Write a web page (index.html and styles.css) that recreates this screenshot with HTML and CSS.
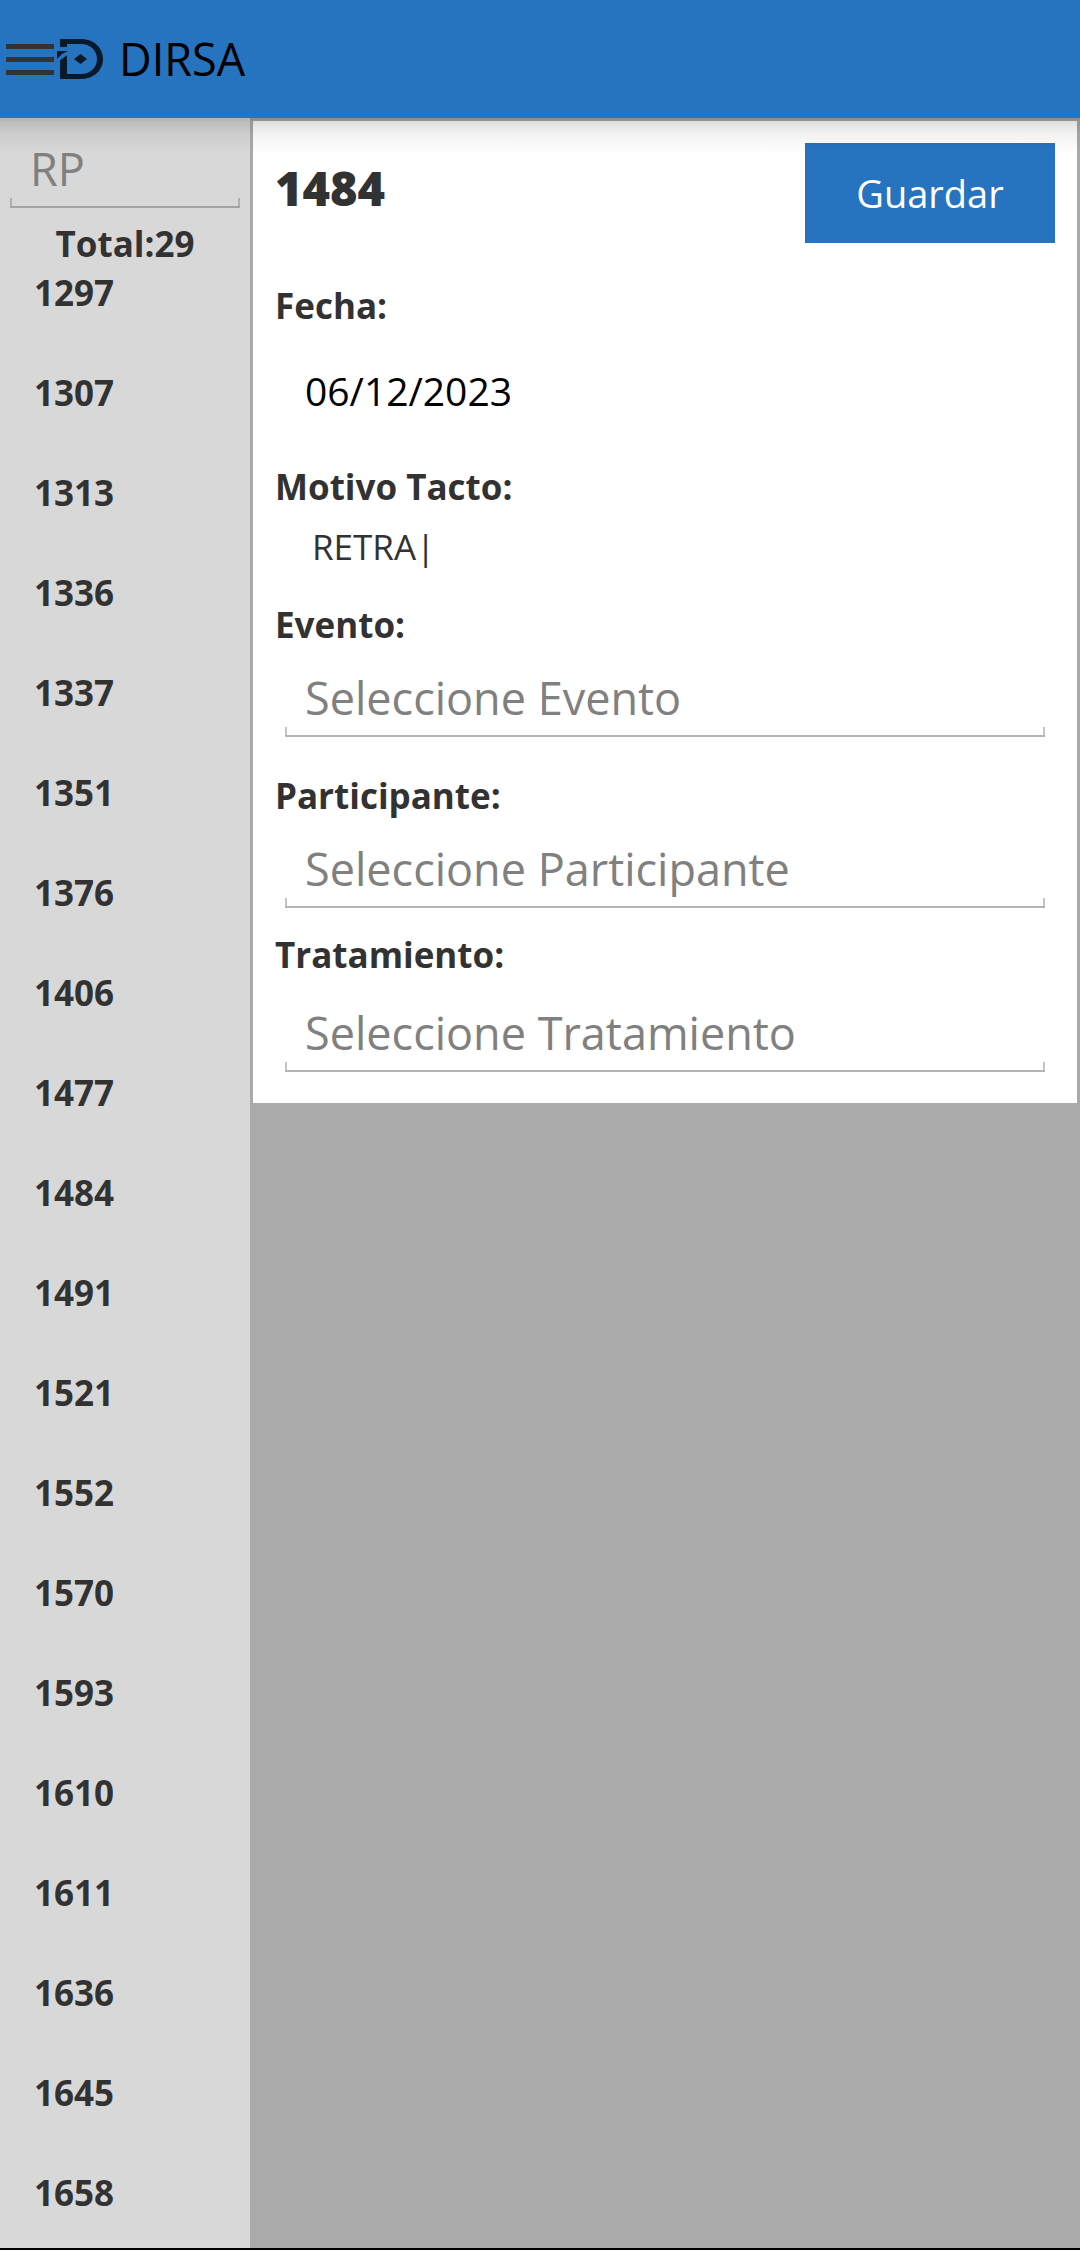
FILE: index.html
```
<!DOCTYPE html>
<html lang="es">
<head>
  <meta charset="utf-8">
  <meta name="viewport" content="width=device-width, initial-scale=1">
  <title>DIRSA</title>
  <link rel="stylesheet" href="styles.css">
</head>
<body>
  <div class="app">
    <header class="topbar">
      <button class="menu" type="button" aria-label="Menú">
        <svg width="48" height="31" viewBox="0 0 48 31" aria-hidden="true">
          <path d="M0 0h48v5H0zM0 13h48v5H0zM0 26h48v5H0z" fill="#333"/>
        </svg>
      </button>
      <svg class="logo" width="46" height="40" viewBox="0 0 46 40" aria-hidden="true">
        <path d="M3 0H24C37 0 46 9 46 20S37 40 24 40H3V21L10 16V35H24C34 35 40 28 40 20S34 5 24 5H10V8H3Z" fill="#071a2b"/>
        <path d="M0 12H11L5 15L0 20Z" fill="#071a2b"/>
        <path d="M1 22L12 13.500" stroke="#2673bf" stroke-width="1.500"/>
        <path d="M17 20L23.500 15L30 20L23.500 25Z" fill="#071a2b"/>
      </svg>
      <span class="brand">DIRSA</span>
    </header>

    <div class="body">
      <aside class="sidebar">
        <input class="field" type="text" placeholder="RP" aria-label="RP">
        <p class="total">Total:29</p>
        <ul class="list">
          <li>1297</li>
          <li>1307</li>
          <li>1313</li>
          <li>1336</li>
          <li>1337</li>
          <li>1351</li>
          <li>1376</li>
          <li>1406</li>
          <li>1477</li>
          <li>1484</li>
          <li>1491</li>
          <li>1521</li>
          <li>1552</li>
          <li>1570</li>
          <li>1593</li>
          <li>1610</li>
          <li>1611</li>
          <li>1636</li>
          <li>1645</li>
          <li>1658</li>
        </ul>
      </aside>

      <main class="main">
        <form class="panel">
          <div class="panel-head">
            <h1 class="title">1484</h1>
            <button class="save" type="button">Guardar</button>
          </div>
          <div class="group group-date">
            <label for="fecha">Fecha:</label>
            <input class="plain date" id="fecha" type="text" value="06/12/2023">
          </div>
          <div class="group group-reason">
            <label for="motivo">Motivo Tacto:</label>
            <input class="plain reason" id="motivo" type="text" value="RETRA|">
          </div>
          <div class="group group-event">
            <label for="evento">Evento:</label>
            <input class="field" id="evento" type="text" placeholder="Seleccione Evento">
          </div>
          <div class="group group-person">
            <label for="participante">Participante:</label>
            <input class="field" id="participante" type="text" placeholder="Seleccione Participante">
          </div>
          <div class="group group-treatment">
            <label for="tratamiento">Tratamiento:</label>
            <input class="field" id="tratamiento" type="text" placeholder="Seleccione Tratamiento">
          </div>
        </form>
      </main>
    </div>
  </div>
</body>
</html>
```
FILE: styles.css
```
* {
  box-sizing: border-box;
}

body {
  margin: 0;
  background: #aaa;
  color: #323232;
  font-family: "Open Sans", sans-serif;
  font-size: 35px;
  line-height: 48px;
}

button,
input {
  border: 0;
  margin: 0;
  padding: 0;
  background: none;
  border-radius: 0;
  color: inherit;
  font: inherit;
}

.app {
  display: flex;
  flex-direction: column;
  min-height: 100vh;
  border-bottom: 2px solid #000;
}

/* Top bar and the shadow it casts on the content */
.topbar {
  position: relative;
  display: flex;
  align-items: center;
  height: 118px;
  padding-left: 6px;
  background: #2673bf;
}

.topbar::after {
  content: "";
  position: absolute;
  top: 100%;
  left: 0;
  right: 0;
  height: 36px;
  background: linear-gradient(rgba(0, 0, 0, 0.18), rgba(0, 0, 0, 0.12) 4px, rgba(0, 0, 0, 0.05) 16px, transparent);
  pointer-events: none;
}

.menu,
.logo {
  display: block;
  flex: none;
}

.menu {
  line-height: 0;
}

.logo {
  margin-left: 3px;
}

.brand {
  margin-left: 16px;
  color: #000;
  font-size: 45px;
  line-height: 60px;
}

.body {
  display: flex;
  flex: 1;
}

/* Sidebar */
.sidebar {
  flex: 0 0 250px;
  padding: 20px 10px 0;
  background: #d8d8d8;
  font-weight: 700;
}

.total {
  margin: 12px 0 0;
  text-align: center;
}

.list {
  display: flex;
  flex-direction: column;
  gap: 52px;
  margin: 1px 0 0;
  padding: 0 0 0 24px;
  list-style: none;
}

/* Text box with a thin bottom line and short upright ends */
.field {
  display: block;
  width: 100%;
  height: 70px;
  padding: 0 20px 8px;
  border-bottom: 2px solid #b4b4b4;
  background:
    linear-gradient(#c4c4c4, #c4c4c4) left bottom / 2px 8px no-repeat,
    linear-gradient(#c4c4c4, #c4c4c4) right bottom / 2px 8px no-repeat;
  font-size: 45px;
  font-weight: 400;
  line-height: 60px;
}

.sidebar .field {
  border-bottom-color: #a4a4a4;
  background-image:
    linear-gradient(#b0b0b0, #b0b0b0),
    linear-gradient(#b0b0b0, #b0b0b0);
}

.field::placeholder {
  color: #808080;
  opacity: 1;
}

/* Detail form */
.main {
  flex: 1;
  min-width: 0;
}

.panel {
  padding: 22px 22px 31px;
  border: 3px solid #aaa;
  border-bottom: 0;
  background: #fff;
}

.panel-head {
  display: flex;
  justify-content: space-between;
  align-items: flex-start;
}

.title {
  margin: 13px 0 0;
  font-size: 47px;
  font-weight: 800;
  line-height: 64px;
}

.save {
  width: 250px;
  height: 100px;
  background: #2673bf;
  color: #fff;
  font-size: 38px;
}

.group {
  display: flex;
  flex-direction: column;
}

.group label {
  font-weight: 700;
}

.group input {
  width: auto;
  margin: 0 10px;
}

.plain {
  padding: 0 20px;
}

.date {
  height: 60px;
  color: #000;
  font-size: 39px;
}

.reason {
  height: 48px;
  padding: 0 27px;
}

.group-date {
  gap: 30px;
  margin-top: 39px;
}

.group-reason {
  gap: 12px;
  margin-top: 43px;
}

.group-event {
  gap: 18px;
  margin-top: 30px;
}

.group-person {
  gap: 18px;
  margin-top: 35px;
}

.group-treatment {
  gap: 23px;
  margin-top: 23px;
}
```
